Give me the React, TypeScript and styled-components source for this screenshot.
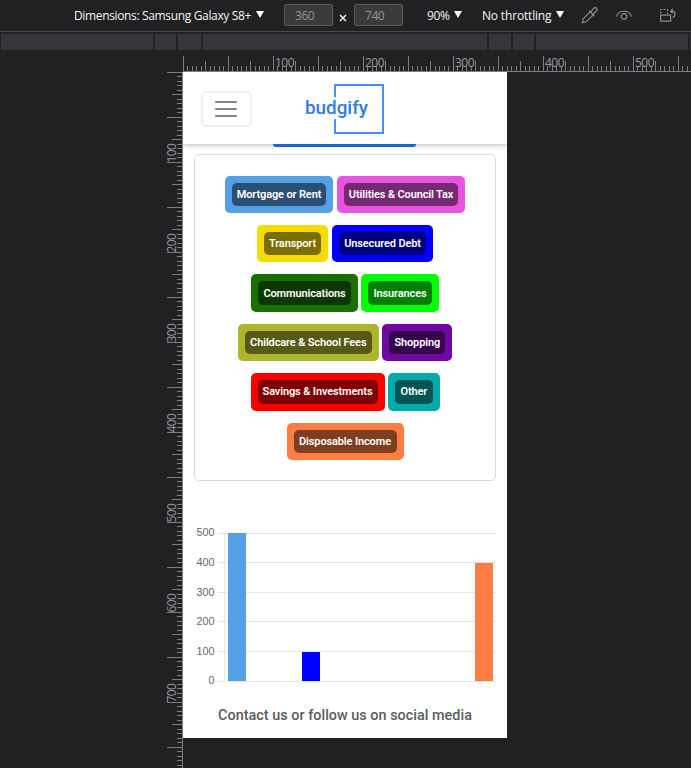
import React from "react";
import styled, { createGlobalStyle } from "styled-components";

const GlobalStyle = createGlobalStyle`
  * { box-sizing: border-box; }
  body { margin: 0; background: #212123; overflow: hidden; }
`;

const Page = styled.div`
  width: 691px;
  height: 768px;
  background: #212123;
  overflow: hidden;
  font-family: "Open Sans", "Noto Sans", sans-serif;
`;

const Toolbar = styled.header`
  display: flex;
  align-items: center;
  height: 32px;
  padding: 0 0 1px 74px;
  border-bottom: 1px solid #4b4c4f;
  color: #f1f1f1;
  font-size: 12px;
  white-space: nowrap;
`;

const Select = styled.div<{ $width: number; $before?: number; $gap: number; $spacing: number }>`
  display: flex;
  align-items: center;
  justify-content: space-between;
  flex: none;
  width: ${(p) => p.$width}px;
  margin-left: ${(p) => p.$before ?? 0}px;
  margin-right: ${(p) => p.$gap}px;
  letter-spacing: ${(p) => p.$spacing}px;
`;

const Caret = styled.i`
  border: 4.5px solid transparent;
  border-top: 7px solid #fff;
  border-bottom: 0;
  margin-top: -2px;
`;

const SizeBox = styled.div`
  width: 49px;
  height: 22px;
  padding-left: 10px;
  border: 1px solid #58595b;
  border-radius: 2px;
  background: #3a3a3b;
  color: #929394;
  line-height: 21px;
  letter-spacing: -0.45px;
`;

const Times = styled.svg`
  width: 8px;
  height: 8px;
  margin: 5px 7px 0 6px;
`;

const ToolIcon = styled.svg<{ $gap: number }>`
  flex: none;
  width: 18px;
  height: 18px;
  margin-right: ${(p) => p.$gap}px;
  fill: none;
  stroke: #8b8c8e;
  stroke-width: 1.2;
`;

const MediaBar = styled.div`
  display: flex;
  gap: 2px;
  height: 18px;
  padding: 2px 0 0 1px;
`;

const MediaRange = styled.div<{ $width: number }>`
  flex: none;
  width: ${(p) => p.$width}px;
  height: 16px;
  background: #35363a;
`;

const TopRuler = styled.svg`
  display: block;
  width: 691px;
  height: 22px;
`;

const Workspace = styled.main`
  display: flex;
  height: 696px;
`;

const SideRuler = styled.svg`
  flex: none;
  width: 183px;
  height: 696px;
`;

const Device = styled.div`
  width: 324px;
  height: 666px;
  background: #fff;
  font-family: Roboto, sans-serif;
  overflow: hidden;
`;

const AppHeader = styled.div`
  display: flex;
  align-items: center;
  position: relative;
  height: 72px;
  padding: 2px 18px 0;
  background: #fff;
  box-shadow: 0 1px 5px rgba(0, 0, 0, 0.28);
`;

const MenuButton = styled.div`
  display: grid;
  place-items: center;
  width: 51px;
  height: 36px;
  padding-right: 2px;
  border: 2px solid #f0f0f0;
  border-radius: 5px;
`;

const Logo = styled.svg`
  width: 86px;
  height: 54px;
  margin-left: 50px;
`;

const SubmitEdge = styled.div`
  width: 143px;
  height: 3px;
  margin: 0 0 7px 90.4px;
  position: relative;
  border-radius: 0 0 5px 5px;
  background: #1c66d3;
`;

const Legend = styled.section`
  display: flex;
  flex-direction: column;
  gap: 12px;
  width: 302px;
  height: 327px;
  margin-left: 11px;
  padding-top: 20.6px;
  border: 1px solid #dcdcdc;
  border-radius: 5px;
`;

const LegendRow = styled.div`
  display: flex;
  justify-content: center;
  gap: 3.5px;
  height: 37.4px;
`;

const Category = styled.div<{ $width: number; $color: string }>`
  width: ${(p) => p.$width}px;
  padding: 7px;
  border-radius: 5px;
  background: ${(p) => p.$color};
`;

const CategoryLabel = styled.div`
  display: flex;
  align-items: center;
  justify-content: center;
  height: 23.4px;
  border-radius: 5px;
  background: rgba(0, 0, 0, 0.5);
  color: #fff;
  font-size: 11px;
  font-weight: 600;
  letter-spacing: -0.13px;
  white-space: nowrap;
`;

const Chart = styled.svg`
  display: block;
  width: 324px;
  height: 170px;
  margin-top: 42px;
`;

const Contact = styled.h2`
  margin: 13px 0 0;
  color: #5a5c5e;
  font-size: 14.4px;
  font-weight: 500;
  line-height: 20px;
  letter-spacing: 0.02px;
  text-align: center;
`;

const ranges = [152, 21, 23, 284, 22, 21, 152, 1];

const rows: [string, string, number][][] = [
  [["Mortgage or Rent", "#559fe7", 108.5], ["Utilities & Council Tax", "#e854df", 128.5]],
  [["Transport", "#f4dc00", 71.5], ["Unsecured Debt", "#0000fe", 101.5]],
  [["Communications", "#187000", 106.5], ["Insurances", "#00ff00", 77.5]],
  [["Childcare & School Fees", "#adb52d", 141], ["Shopping", "#6f08a1", 70]],
  [["Savings & Investments", "#fe0000", 134], ["Other", "#00aaa9", 51.5]],
  [["Disposable Income", "#fd7d42", 117]],
];

const tickLength = (i: number) => (i % 10 === 0 ? 15 : i % 5 === 0 ? 10 : 5);

const HorizontalRuler = () => (
  <TopRuler viewBox="0 0 691 22" shapeRendering="crispEdges">
    <path
      stroke="#7c7d7f"
      d={"M183 21.5H691" + Array.from({ length: 113 }, (_, i) => `M${Math.floor(183 + i * 4.5) + 0.5} 21v-${tickLength(i)}`).join("")}
    />
    {[1, 2, 3, 4, 5].map((n) => (
      <text key={n} x={185 + n * 90} y="17" fill="#96999d" fontSize="12" textLength="19.5">
        {n * 100}
      </text>
    ))}
  </TopRuler>
);

const VerticalRuler = () => (
  <SideRuler viewBox="0 0 183 696" shapeRendering="crispEdges">
    <path
      stroke="#7c7d7f"
      d={"M182.5 0V696" + Array.from({ length: 155 }, (_, i) => `M182 ${Math.floor(i * 4.5) + 0.5}h-${tickLength(i)}`).join("")}
    />
    {[1, 2, 3, 4, 5, 6, 7].map((n) => (
      <text key={n} transform={`translate(176 ${n * 90 + 0.5}) rotate(-90)`} fill="#96999d" fontSize="12" textLength="19.5">
        {n * 100}
      </text>
    ))}
  </SideRuler>
);

const SpendingChart = () => (
  <Chart viewBox="0 0 324 170">
    <g shapeRendering="crispEdges">
      <path stroke="#e5e5e5" d="M35 10.5H313M35 39.5H313M35 69.5H313M35 98.5H313M35 128.5H313M35 158.5H313M41.5 10V158" />
      <path fill="#559fe7" d="M45 10h18v148h-18z" />
      <path fill="#0000fe" d="M119 129h18v29h-18z" />
      <path fill="#fd7d42" d="M292 40h18v118h-18z" />
    </g>
    {[500, 400, 300, 200, 100, 0].map((v, i) => (
      <text key={v} x="31.5" y={13.3 + i * 29.6} textAnchor="end" fill="#666" fontFamily="Liberation Sans, sans-serif" fontSize="10.8">
        {v}
      </text>
    ))}
  </Chart>
);

export default function App() {
  return (
    <Page>
      <GlobalStyle />
      <Toolbar>
        <Select $width={190} $gap={20} $spacing={-0.35}>
          Dimensions: Samsung Galaxy S8+
          <Caret />
        </Select>
        <SizeBox>360</SizeBox>
        <Times viewBox="0 0 8 8" stroke="#eee" strokeWidth="1.5">
          <path d="M1 1l6 6M7 1l-6 6" />
        </Times>
        <SizeBox>740</SizeBox>
        <Select $width={35} $before={24} $gap={20} $spacing={-0.4}>
          90%
          <Caret />
        </Select>
        <Select $width={82} $gap={17} $spacing={-0.17}>
          No throttling
          <Caret />
        </Select>
        <ToolIcon $gap={16} viewBox="0 0 18 18">
          <path d="M9.2 5.8l-7 7-.8 3.8 3.8-.8 7-7M8 4.6l5.4 5.4M10 5.8l2.5-3.3c2-2.3 5 .4 2.8 2.8L12 8.3" />
        </ToolIcon>
        <ToolIcon $gap={26} viewBox="0 0 18 18">
          <path d="M1.5 10.5C3.5 3.5 14.5 3.5 16.5 10.5" />
          <circle cx="9" cy="10.5" r="2.8" />
        </ToolIcon>
        <ToolIcon $gap={0} viewBox="0 0 18 18">
          <path d="M1.6 9.1h10v6h-10z" />
          <path d="M1.6 7.5V3.5h7V8" strokeDasharray="2 1.5" />
          <path d="M12 5.2h1.5c3.2 0 3.2 6 0 6M13.8 3l-2.2 2.2 2.2 2.2" />
        </ToolIcon>
      </Toolbar>
      <MediaBar>
        {ranges.map((w, i) => (
          <MediaRange key={i} $width={w} />
        ))}
      </MediaBar>
      <HorizontalRuler />
      <Workspace>
        <VerticalRuler />
        <Device>
          <AppHeader>
            <MenuButton>
              <svg width="22" height="18" stroke="#858585" strokeWidth="2.2" strokeLinecap="round">
                <path d="M1 2h20M1 9h20M1 16h20" />
              </svg>
            </MenuButton>
            <Logo viewBox="0 0 86 54">
              <path d="M33 15V3H81V51H33V37" fill="none" stroke="#4a8df3" strokeWidth="2" />
              <text x="3" y="32" fill="#2f7bea" fontSize="19" fontWeight="500" textLength="63" lengthAdjust="spacingAndGlyphs">
                budgify
              </text>
            </Logo>
          </AppHeader>
          <SubmitEdge />
          <Legend>
            {rows.map((row, i) => (
              <LegendRow key={i}>
                {row.map(([label, color, width]) => (
                  <Category key={label} $color={color} $width={width}>
                    <CategoryLabel>{label}</CategoryLabel>
                  </Category>
                ))}
              </LegendRow>
            ))}
          </Legend>
          <SpendingChart />
          <Contact>Contact us or follow us on social media</Contact>
        </Device>
      </Workspace>
    </Page>
  );
}
